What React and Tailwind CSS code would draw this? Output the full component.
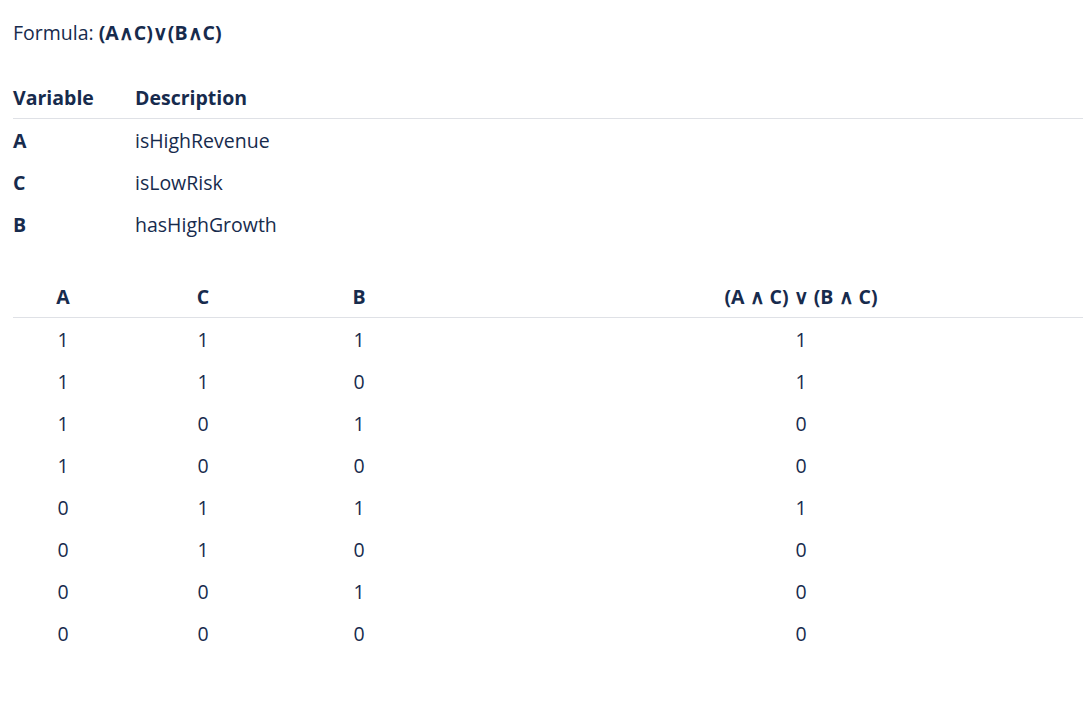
import React from 'react';

const variables = [
    {name: 'A', description: 'isHighRevenue'},
    {name: 'C', description: 'isLowRisk'},
    {name: 'B', description: 'hasHighGrowth'},
];

const rows = [
    [1, 1, 1, 1],
    [1, 1, 0, 1],
    [1, 0, 1, 0],
    [1, 0, 0, 0],
    [0, 1, 1, 1],
    [0, 1, 0, 0],
    [0, 0, 1, 0],
    [0, 0, 0, 0],
];

const cols = 'grid grid-cols-[100px_180px_132px_1fr]';

function App() {
    return (
        <div className="min-h-screen bg-white pl-[13px] pt-[19px] text-[#172b4d] text-[19.5px] leading-[27px]"
             style={{fontFamily: '"Open Sans", "Noto Sans", sans-serif'}}>
            <p>Formula: <b className="font-bold">(A∧C)∨(B∧C)</b></p>

            <div className="mt-[30px]">
                <div className="grid grid-cols-[122px_1fr] h-[43px] items-center border-b border-[#dfe1e6] font-bold">
                    <div>Variable</div>
                    <div>Description</div>
                </div>
                {variables.map(v => (
                    <div key={v.name} className="grid grid-cols-[122px_1fr] h-[42px] pt-[1px] items-center">
                        <div className="font-bold">{v.name}</div>
                        <div>{v.description}</div>
                    </div>
                ))}
            </div>

            <div className="mt-[30px]">
                <div className={`${cols} h-[43px] items-center border-b border-[#dfe1e6] font-bold text-center`}>
                    <div>A</div>
                    <div>C</div>
                    <div>B</div>
                    <div className="pl-[94px]">(A ∧ C) ∨ (B ∧ C)</div>
                </div>
                {rows.map((r, i) => (
                    <div key={i} className={`${cols} h-[42px] pt-[1px] items-center text-center`}>
                        <div>{r[0]}</div>
                        <div>{r[1]}</div>
                        <div>{r[2]}</div>
                        <div className="pl-[94px]">{r[3]}</div>
                    </div>
                ))}
            </div>
        </div>
    );
}

export default App;
